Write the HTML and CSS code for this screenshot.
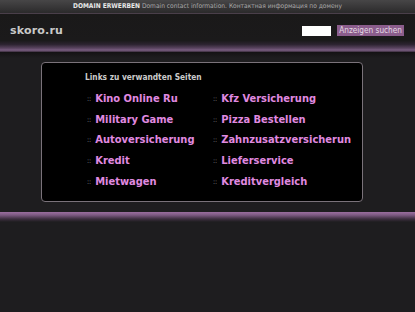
FILE: index.html
```html
<!DOCTYPE html>
<html>
<head>
<meta charset="utf-8">
<link rel="stylesheet" href="styles.css">
</head>
<body>
<div class="topbar"><b>DOMAIN ERWERBEN</b> Domain contact information. Контактная информация по домену</div>
<div class="header">
  <div class="logo">skoro.ru</div>
  <form class="search">
    <input class="field" type="text">
    <button class="btn" type="button">Anzeigen suchen</button>
  </form>
</div>
<div class="main">
  <div class="box">
    <div class="title">Links zu verwandten Seiten</div>
    <div class="links">
      <a class="lnk">Kino Online Ru</a>
      <a class="lnk">Kfz Versicherung</a>
      <a class="lnk">Military Game</a>
      <a class="lnk">Pizza Bestellen</a>
      <a class="lnk">Autoversicherung</a>
      <a class="lnk">Zahnzusatzversicherung</a>
      <a class="lnk">Kredit</a>
      <a class="lnk">Lieferservice</a>
      <a class="lnk">Mietwagen</a>
      <a class="lnk">Kreditvergleich</a>
    </div>
  </div>
</div>
<div class="footline"></div>
</body>
</html>
```
FILE: styles.css
```css
html, body {
  margin: 0;
  padding: 0;
  background: #1e1d1f;
  height: 100%;
  overflow: hidden;
}
body {
  font-family: "DejaVu Sans Condensed", "DejaVu Sans", sans-serif;
}
.topbar {
  height: 13px;
  border-bottom: 1px solid #4a3f4a;
  background: linear-gradient(#474647, #2b2a2b);
  color: #a9a9a9;
  font-size: 6.6px;
  line-height: 13px;
  text-align: center;
  white-space: nowrap;
}
.topbar b {
  color: #e8e8e8;
  font-weight: bold;
}
.header {
  height: 38px;
  display: flex;
  align-items: center;
  justify-content: space-between;
  padding: 0 11px 5px 10px;
  box-sizing: border-box;
  background: linear-gradient(#1a1919 0%, #1b1a1b 70%, #2c2330 80%, #5a4460 90%, #7a5e82 95%, #3a2d3c 100%);
}
.logo {
  color: #c9c9c9;
  font-weight: bold;
  font-size: 11px;
  font-family: "DejaVu Sans", sans-serif;
  letter-spacing: 0.2px;
}
.search {
  display: flex;
  align-items: center;
  gap: 6px;
  margin: 0;
}
.field {
  width: 29px;
  height: 10px;
  border: 0;
  padding: 0;
  background: #fff;
}
.btn {
  height: 11px;
  padding: 0 2px;
  border: 0;
  background: #8b5d8c;
  color: #e4dbe4;
  font-family: "DejaVu Sans Condensed", "DejaVu Sans", sans-serif;
  font-size: 8.2px;
  line-height: 11px;
}
.main {
  height: 160px;
  box-sizing: border-box;
  padding: 10px 0 0 41px;
  background: linear-gradient(#141214, #1e1d1f 6px);
}
.box {
  width: 322px;
  height: 140px;
  box-sizing: border-box;
  border: 1px solid #7a727a;
  border-radius: 4px;
  background: #000;
  padding: 8px 10px 0 43px;
  overflow: hidden;
}
.title {
  color: #cbcbcb;
  font-size: 8.3px;
  font-weight: bold;
  height: 12px;
  line-height: 12px;
}
.links {
  display: grid;
  grid-template-columns: 126px 138px;
  grid-auto-rows: 20.7px;
  margin-top: 6px;
  margin-left: 2px;
}
.lnk {
  color: #e08ae0;
  font-weight: bold;
  font-size: 11px;
  line-height: 20px;
  white-space: nowrap;
  overflow: hidden;
}
.lnk::before {
  content: "::";
  color: #9a9a9a;
  font-weight: normal;
  font-size: 7px;
  margin-right: 4px;
  position: relative;
  top: -1px;
}
.footline {
  height: 10px;
  background: linear-gradient(#9a6e9e, #7d5a82 30%, #3c2e3e 70%, #1e1d1f);
}
```
